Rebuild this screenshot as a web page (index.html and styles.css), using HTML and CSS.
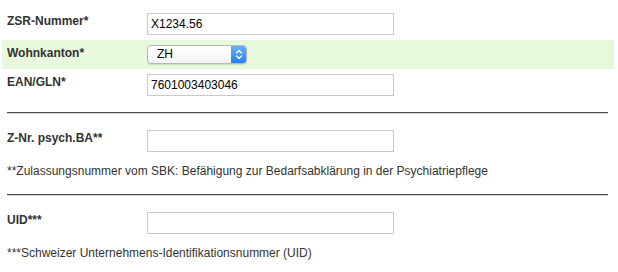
FILE: index.html
```html
<!DOCTYPE html>
<html lang="de">
<head>
    <meta charset="UTF-8">
    <meta name="viewport" content="width=device-width, initial-scale=1.0">
    <title>Stammdaten</title>
    <link rel="stylesheet" href="styles.css">
</head>
<body>
    <div class="form">
        <!-- Pflichtfelder -->
        <div class="row first">
            <label class="label">ZSR-Nummer*</label>
            <input type="text" class="field" value="X1234.56">
        </div>
        <div class="row highlight">
            <label class="label">Wohnkanton*</label>
            <div class="select">
                <span class="select-value">ZH</span>
                <span class="select-arrows">
                    <svg width="16" height="19" viewBox="0 0 16 19">
                        <path d="M5.5 8 L8 5.5 L10.5 8" fill="none" stroke="#fff" stroke-width="1.4" stroke-linecap="round" stroke-linejoin="round"/>
                        <path d="M5.5 11 L8 13.5 L10.5 11" fill="none" stroke="#fff" stroke-width="1.4" stroke-linecap="round" stroke-linejoin="round"/>
                    </svg>
                </span>
            </div>
        </div>
        <div class="row">
            <label class="label">EAN/GLN*</label>
            <input type="text" class="field" value="7601003403046">
        </div>

        <hr class="divider">

        <div class="row spaced">
            <label class="label">Z-Nr. psych.BA**</label>
            <input type="text" class="field">
        </div>
        <p class="note">**Zulassungsnummer vom SBK: Befähigung zur Bedarfsabklärung in der Psychiatriepflege</p>

        <hr class="divider">

        <div class="row spaced">
            <label class="label">UID***</label>
            <input type="text" class="field">
        </div>
        <p class="note last">***Schweizer Unternehmens-Identifikationsnummer (UID)</p>
    </div>
</body>
</html>
```

FILE: styles.css
```css
body {
    margin: 0;
    background-color: #fff;
    font-family: "Liberation Sans", Arial, sans-serif;
    font-size: 12px;
    color: #333;
}
.form {
    width: 612px;
    margin-left: 2px;
}
.row {
    display: flex;
    align-items: flex-start;
    padding: 5px 0 0 5px;
}
.row.first {
    padding-top: 13px;
    padding-bottom: 5px;
}
.row.highlight {
    background-color: #e8f8dc;
    padding-bottom: 5px;
}
.row.spaced {
    padding-top: 16px;
}
.label {
    width: 140px;
    padding-top: 1px;
    line-height: 14px;
    font-weight: bold;
    color: #333;
}
.field {
    box-sizing: border-box;
    width: 247px;
    height: 22px;
    margin: 0;
    padding: 0 3px;
    border: 1px solid #cacaca;
    border-radius: 0;
    font-family: "Liberation Sans", Arial, sans-serif;
    font-size: 12px;
    color: #000;
    background: #fff;
    outline: none;
}
.select {
    box-sizing: border-box;
    display: flex;
    width: 100px;
    height: 19px;
    border: 1px solid #b8b8b8;
    border-radius: 4px;
    background: linear-gradient(#fff, #f4f4f4);
    box-shadow: 0 1px 1px rgba(0, 0, 0, 0.12);
    overflow: hidden;
}
.select-value {
    flex: 1;
    padding-left: 9px;
    line-height: 17px;
    font-size: 12px;
    color: #000;
}
.select-arrows {
    width: 16px;
    margin: -1px -1px -1px 0;
    background: linear-gradient(#6db4fb, #1b7ff8);
}
.select-arrows svg {
    display: block;
}
.divider {
    height: 0;
    margin: 16px 6px 0 5px;
    border: 0;
    border-top: 1px solid #4d4d4d;
    border-bottom: 1px solid #d6d6d6;
}
.note {
    margin: 12px 0 0 5px;
    line-height: 14px;
    color: #333;
}
.note.last {
    margin-top: 12px;
}
```
